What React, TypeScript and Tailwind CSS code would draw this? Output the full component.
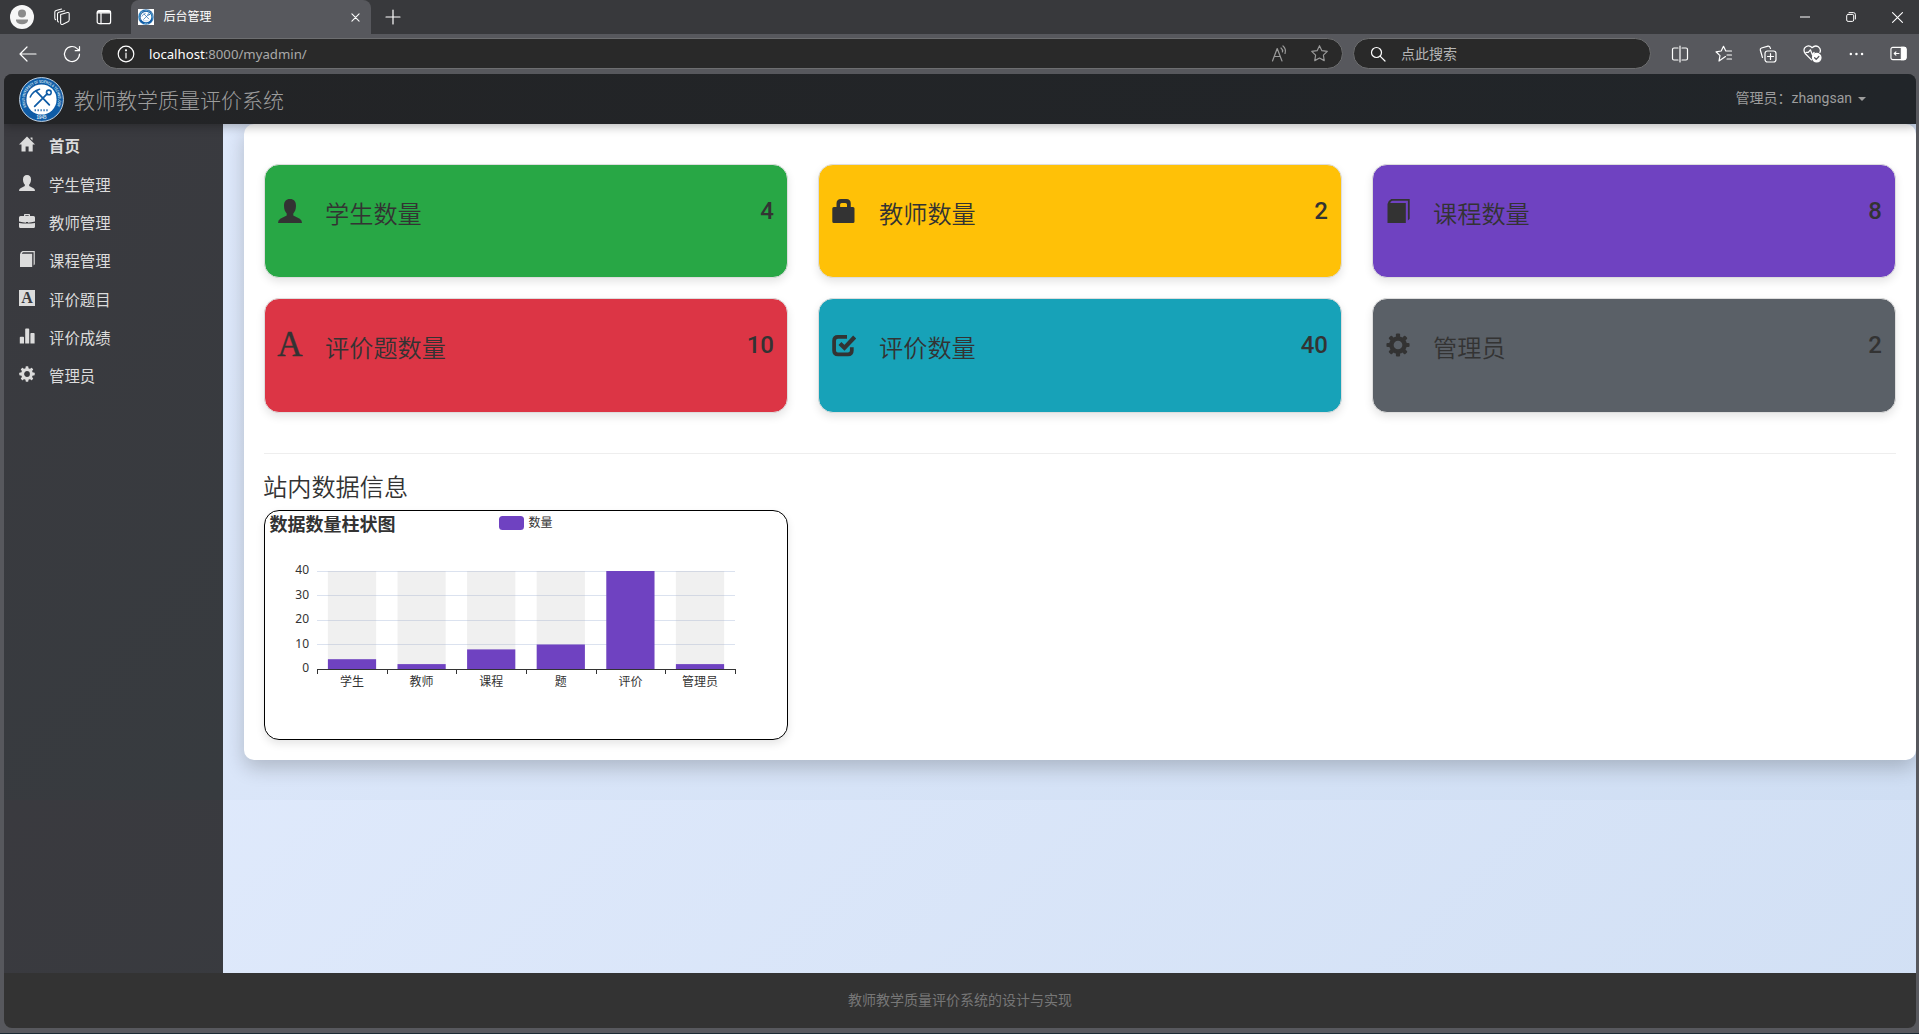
import React from "react";

const FONT = "font-['Roboto','Noto_Sans_CJK_SC',sans-serif]";
const UI = "font-['Noto_Sans','Noto_Sans_CJK_SC',sans-serif]";

type IconProps = { className?: string };

const glyphs: Record<string, React.ReactNode> = {
  home: <path d="M8 0.5 L16 8.6 H13.7 V15.5 H9.6 V10.5 H6.6 V15.5 H2.5 V8.6 H0 Z M11.5 1.6 h2 v3 l-2-2z" />,
  user: <path d="M8 0 C10.6 0 12 1.6 12 4.5 C12 7 11.2 8.6 10.2 9.6 V11 L14.5 13.2 Q16 14 16 16 H0 Q0 14 1.5 13.2 L5.8 11 V9.6 C4.8 8.6 4 7 4 4.5 C4 1.6 5.4 0 8 0 Z" />,
  briefcase: <path fillRule="evenodd" d="M5 3 V1.8 Q5 1 5.8 1 H10.2 Q11 1 11 1.8 V3 H14.5 Q16 3 16 4.5 V8.6 Q12 9.6 9 9.8 V9 H7 V9.8 Q4 9.6 0 8.6 V4.5 Q0 3 1.5 3 Z M6.3 3 H9.7 V2.2 H6.3 Z M0 10 Q4 10.6 8 10.6 Q12 10.6 16 10 V13.5 Q16 15 14.5 15 H1.5 Q0 15 0 13.5 Z" />,
  book: <path d="M1 3.4 Q1.4 1 3.5 0 H15.8 V13.2 L14.6 14.4 V1.2 H4.3 Q3 1.6 2.8 2.7 H13.2 V16 H1 Z" />,
  chart: <path d="M0.8 9.5 q0-.8.8-.8 h2.6 q.8 0 .8.8 V15.5 H0.8Z M6.2 1.3 q0-.8.8-.8 h2.4 q.8 0 .8.8 V15.5 H6.2Z M11.4 5.8 q0-.8.8-.8 h2.6 q.8 0 .8.8 V15.5 H11.4Z" />,
  lock: <path fillRule="evenodd" d="M3 5.3 V3 Q3 0 6 0 H9.5 Q12.5 0 12.5 3 V5.3 H14 Q15 5.3 15 6.3 V15 Q15 16 14 16 H1.2 Q0.2 16 0.2 15 V6.3 Q0.2 5.3 1.2 5.3 Z M5.4 5.3 H10 V3.6 Q10 2.6 9 2.6 H6.4 Q5.4 2.6 5.4 3.6 Z" />,
  check: (
    <>
      <path d="M10 2.6 H4 Q1.4 2.6 1.4 5.2 V11.6 Q1.4 14.2 4 14.2 H10.6 Q13.2 14.2 13.2 11.6 V9.5" fill="none" stroke="currentColor" strokeWidth="2.5" />
      <path d="M5.3 7 L8.3 9.9 L15.1 2.7" fill="none" stroke="currentColor" strokeWidth="2.8" />
    </>
  ),
};

function Glyph({ name, className = "" }: { name: string } & IconProps) {
  if (name === "font")
    return (
      <span className={`${className} flex items-center justify-center font-['Liberation_Serif',serif]`}>
        <span className="-mt-px text-[35px] font-normal leading-none [-webkit-text-stroke:0.4px_#333]">A</span>
      </span>
    );
  if (name === "fontBox")
    return (
      <span className={`${className} flex items-center justify-center bg-[#dcdcdc] font-['Liberation_Serif',serif] text-[16px] font-bold leading-none text-[#393a3f]`}>
        A
      </span>
    );
  if (name === "cog")
    return (
      <svg viewBox="0 0 16 16" className={className}>
        <circle cx="8" cy="8" r="4.4" fill="none" stroke="currentColor" strokeWidth="3" />
        {[0, 45, 90, 135, 180, 225, 270, 315].map((a) => (
          <rect key={a} x="6.6" y="0.3" width="2.8" height="3.4" rx="0.7" fill="currentColor" transform={`rotate(${a} 8 8)`} />
        ))}
      </svg>
    );
  return (
    <svg viewBox="0 0 16 16" fill="currentColor" className={className}>
      {glyphs[name]}
    </svg>
  );
}

function Line({ children, className = "size-5", vb = "0 0 20 20" }: { children: React.ReactNode; className?: string; vb?: string }) {
  return (
    <svg viewBox={vb} fill="none" stroke="currentColor" strokeWidth="1.2" strokeLinecap="round" strokeLinejoin="round" className={`shrink-0 ${className}`}>
      {children}
    </svg>
  );
}

function Emblem({ className = "" }: IconProps) {
  return (
    <svg viewBox="0 0 46 46" className={className}>
      <defs>
        <path id="ringTop" d="M7.6 30.5 A17.1 17.1 0 1 1 38.4 30.5" />
      </defs>
      <circle cx="23" cy="23" r="22.4" fill="#0f5ca6" stroke="#c8d8e8" strokeWidth="1" />
      <circle cx="23" cy="23" r="15.4" fill="#fff" />
      <text fontSize="4.2" fontWeight="700" fill="#dbe8f4" fontFamily="Liberation Sans" textLength="68" lengthAdjust="spacingAndGlyphs">
        <textPath href="#ringTop" textLength="68" lengthAdjust="spacingAndGlyphs">ANHUI UNIVERSITY OF SCIENCE &amp; TECHNOLOGY</textPath>
      </text>
      <text x="23" y="43.2" fontSize="4.6" fontWeight="700" fill="#dbe8f4" textAnchor="middle" fontFamily="Liberation Sans">1945</text>
      <g stroke="#0f5ca6" fill="none" strokeLinecap="round">
        <path d="M17.5 14.5 L31 28.5 M29 17 L16 30" strokeWidth="1.8" />
        <path d="M11.5 20.5 Q14 14.5 21 12.5" strokeWidth="1.6" />
        <circle cx="30.5" cy="15.8" r="2.4" strokeWidth="1.6" />
        <path d="M16 34 H30" strokeWidth="2" strokeDasharray="1.2 1.8" strokeLinecap="butt" />
      </g>
    </svg>
  );
}

function Browser() {
  return (
    <header className={`${UI} shrink-0 text-white`}>
      <div className="flex h-[34px] bg-[#38393c]">
        <div className="flex w-[131px] items-center bg-[#38393c] pl-[10px]">
          <svg viewBox="0 0 24 24" className="size-6">
            <circle cx="12" cy="12" r="12" fill="#f7f7f7" />
            <circle cx="12" cy="8.5" r="4" fill="#8b8b8b" />
            <path d="M6 14.5 H18 V15.5 Q17 19.3 12 19.3 Q7 19.3 6 15.5Z" fill="#8b8b8b" />
          </svg>
          <Line className="ml-[19px] size-[18px]">
            <path d="M8.5 7.2 L16 5 Q18 4.6 18 6.5 V13 Q18 14.5 16.6 15.2 L11 18 Q8.5 19 8.5 16.8 Z" />
            <path d="M6 15.5 Q5 15 5 13.5 V6.5 Q5 5.3 6.5 4.8 L13 3 M3 13 Q2 12.5 2 11 V4.5 Q2 3.3 3.5 2.8 L9.5 1.2" />
          </Line>
          <Line className="ml-[25px] size-[16px]" vb="0 0 16 16">
            <rect x="1.2" y="1.7" width="13.4" height="13" rx="2" />
            <path d="M1.2 4 H14.6 M5 4 V14.7" />
            <path d="M2 2.8 H14" strokeWidth="2" />
          </Line>
        </div>
        <div className="flex w-[240px] items-center rounded-t-lg bg-[#57585d] pl-[7px] pr-[11px]">
          <span className="flex size-4 bg-white"><Emblem className="size-4" /></span>
          <span className="ml-[9.5px] text-[12px]">后台管理</span>
          <Line className="ml-auto size-[9px]" vb="0 0 10 10"><path d="M1 1 L9 9 M9 1 L1 9" /></Line>
        </div>
        <Line className="ml-[14px] mt-[9px] size-4" vb="0 0 16 16"><path d="M8 1 V15 M1 8 H15" /></Line>
        <div className="ml-auto mr-4 flex items-center gap-[36px]">
          <Line className="size-[10px]" vb="0 0 10 10"><path d="M0.5 5 H9.5" /></Line>
          <Line className="size-[10px]" vb="0 0 10 10"><rect x="0.7" y="2.4" width="7" height="7" rx="1.4" strokeWidth="1" /><path d="M3 0.6 H7.4 Q9.4 0.6 9.4 2.6 V7" strokeWidth="1" /></Line>
          <Line className="size-[11px]" vb="0 0 10 10"><path d="M0.5 0.5 L9.5 9.5 M9.5 0.5 L0.5 9.5" strokeWidth="1" /></Line>
        </div>
      </div>
      <div className="flex h-10 items-center bg-[#57585d] pb-px pl-[18px]">
        <Line className="size-5"><path d="M18 10 H2 M9 3 L2 10 L9 17" /></Line>
        <Line className="ml-6 size-5"><path d="M17.5 10 A7.5 7.5 0 1 1 15.2 4.6 L17.5 6.7 M17.5 2.5 V6.7 H13.2" /></Line>
        <div className="ml-[19px] flex h-[31px] w-[1242px] items-center rounded-full border border-[#6d6e70] bg-[#292929] pl-[15px] pr-[13px]">
          <Line className="size-[18px]" vb="0 0 18 18"><circle cx="9" cy="9" r="7.8" /><path d="M9 8 V13" /><circle cx="9" cy="5.3" r=".5" fill="currentColor" /></Line>
          <span className="ml-[14px] pt-[2px] text-[13.2px] text-[#a9a9a9]"><span className="text-white">localhost</span>:8000/myadmin/</span>
          <Line className="ml-auto size-[18px] text-[#9b9b9b]" vb="0 0 18 18"><path d="M1.5 16 L6.2 3.5 L11 16 M3.2 11.5 H9.2 M10 3 Q12 4.5 11.5 7 M12 1 Q15.5 4 14 8.5" /></Line>
          <Line className="ml-[21px] size-[19px] text-[#9b9b9b]"><path d="M10 1.8 L12.5 7 L18.2 7.8 L14.1 11.8 L15 17.5 L10 14.8 L5 17.5 L5.9 11.8 L1.8 7.8 L7.5 7 Z" /></Line>
        </div>
        <div className="ml-[10px] flex h-[31px] w-[298px] items-center rounded-full border border-[#6d6e70] bg-[#292929] pl-4">
          <Line className="size-4" vb="0 0 16 16"><circle cx="6.5" cy="6.5" r="5" /><path d="M10.3 10.3 L15 15" /></Line>
          <span className="ml-[15px] text-[14px] leading-none text-[#b5b5b5]">点此搜索</span>
        </div>
        <div className="ml-auto mr-[12px] flex items-center gap-[26px]">
          <Line className="size-[18px]" vb="0 0 18 18"><path d="M7 3 H3 Q1.5 3 1.5 4.5 V13.5 Q1.5 15 3 15 H7 M11 3 H15 Q16.5 3 16.5 4.5 V13.5 Q16.5 15 15 15 H11 M9 1 V17" /></Line>
          <Line className="size-[18px]" vb="0 0 18 18"><path d="M10.5 11.6 L4 16 L5 10.6 L1 6.8 L6.2 6 L8.5 1.3 L10.8 6 H16.5 M12 10 H16.5 M12 14 H16.5" /></Line>
          <Line className="size-[18px]" vb="0 0 18 18"><rect x="6" y="6" width="11" height="11" rx="2.5" /><path d="M11.5 8.5 V14.5 M8.5 11.5 H14.5 M3.5 12.5 L1.3 5 Q1 3.5 2.5 3 L9 1.2 Q10.5 1 11 2.3 L11.5 3.5" /></Line>
          <Line className="size-[19px]" vb="0 0 18 18"><path d="M8 15 L2.3 9.3 Q.2 6.5 1.4 4 Q4 .5 7.5 2.5 L8.5 3.5 Q11.5 .8 14.5 2.6 Q17.5 5 16 8 M3 8 H5 L7 5.5 L9 10.5 L10.5 8" /><circle cx="13" cy="13" r="4" fill="#fff" /><path d="M11 13 L12.5 14.5 L15 11.8" stroke="#57585d" /></Line>
          <svg viewBox="0 0 18 18" className="size-[16px]" fill="currentColor"><circle cx="3.2" cy="9" r="1.4" /><circle cx="9.5" cy="9" r="1.4" /><circle cx="15.8" cy="9" r="1.4" /></svg>
          <Line className="size-[17px]" vb="0 0 18 18"><rect x="1" y="2.5" width="16" height="13" rx="2" /><path d="M12 2.5 H15 Q17 2.5 17 4.5 V13.5 Q17 15.5 15 15.5 H12Z" fill="#fff" /><path d="M9.5 9 H4.5 M6.3 7.2 L4.5 9 L6.3 10.8" /></Line>
        </div>
      </div>
    </header>
  );
}

const menu = [
  { icon: "home", label: "首页", gap: "h-[38px]" },
  { icon: "user", label: "学生管理", gap: "h-[39px]" },
  { icon: "briefcase", label: "教师管理", gap: "h-[38px]" },
  { icon: "book", label: "课程管理", gap: "h-[38px]" },
  { icon: "fontBox", label: "评价题目", gap: "h-[39px]" },
  { icon: "chart", label: "评价成绩", gap: "h-[38px]" },
  { icon: "cog", label: "管理员", gap: "h-[38px]" },
];

const stats = [
  { icon: "user", label: "学生数量", value: 4, bg: "bg-[#28a745]" },
  { icon: "lock", label: "教师数量", value: 2, bg: "bg-[#ffc107]" },
  { icon: "book", label: "课程数量", value: 8, bg: "bg-[#6f42c1]" },
  { icon: "font", label: "评价题数量", value: 10, bg: "bg-[#dc3545]" },
  { icon: "check", label: "评价数量", value: 40, bg: "bg-[#17a2b8]" },
  { icon: "cog", label: "管理员", value: 2, bg: "bg-[#5a6067]" },
];

const bars: [string, number][] = [["学生", 4], ["教师", 2], ["课程", 8], ["题", 10], ["评价", 40], ["管理员", 2]];

function BarChart() {
  const step = 69.6;
  const x0 = 52.2;
  return (
    <svg viewBox="0 0 522 228" className="block h-[228px] w-[522px]" fontSize="12" fill="#333" fontFamily="'Noto Sans','Noto Sans CJK SC',sans-serif">
      <text x="4.5" y="20" fontSize="18" fontWeight="700">数据数量柱状图</text>
      <rect x="234" y="5" width="25" height="14" rx="3.5" fill="#6f42c1" />
      <text x="263.5" y="15.5">数量</text>
      {[10, 20, 30, 40].map((v) => (
        <path key={v} d={`M52 ${Math.floor(158 - v * 2.45) + 0.5} H470`} stroke="#dbe2ef" />
      ))}
      {bars.map(([name, v], i) => (
        <g key={name}>
          <rect x={x0 + i * step + 10.7} y="60" width="48.2" height="98" fill="#b4b4b4" fillOpacity="0.2" />
          <rect x={x0 + i * step + 10.7} y={158 - v * 2.45} width="48.2" height={v * 2.45} fill="#6f42c1" />
          <text x={x0 + (i + 0.5) * step} y="175" textAnchor="middle">{name}</text>
        </g>
      ))}
      {[0, 10, 20, 30, 40].map((v) => (
        <text key={v} x="44" y={161 - v * 2.45} textAnchor="end">{v}</text>
      ))}
      <path d="M52 158.5 H470" stroke="#333" />
      {[0, 1, 2, 3, 4, 5, 6].map((i) => (
        <path key={i} d={`M${Math.round(x0 + i * step) + 0.5} 158 V163`} stroke="#333" />
      ))}
    </svg>
  );
}

export default function App() {
  return (
    <div className="flex h-[1034px] w-[1919px] flex-col overflow-hidden border-b border-[#1c2a33] bg-[#57585d]">
      <Browser />
      <div className={`${FONT} mx-1 mr-[3px] flex h-[954px] flex-col overflow-hidden rounded-lg bg-[#333]`}>
        <nav className="z-10 flex h-[50px] shrink-0 items-center bg-linear-to-r from-[#232426] to-[#212529] pl-[15px] pr-[50px] text-[#9d9d9d] shadow-[0_2px_10px_rgba(0,0,0,0.3)]">
          <Emblem className="size-[45px]" />
          <span className="ml-[10px] pt-[4px] text-[21px] font-light leading-none">教师教学质量评价系统</span>
          <span className="ml-auto pb-[2px] text-[14px] leading-[18px]">管理员：zhangsan</span>
          <span className="ml-[6px] border-x-4 border-t-4 border-x-transparent border-t-[#9d9d9d]" />
        </nav>
        <div className="flex h-[849px] shrink-0 bg-[linear-gradient(135deg,#e0eafc,#cfdef3)] bg-[length:100%_676px]">
          <aside className="w-[219px] shrink-0 bg-[linear-gradient(135deg,#3a3a3f,#373b3f)] bg-[length:100%_676px] pt-[3px] text-[15px] text-[#dcdcdc]">
            {menu.map((m, i) => (
              <div key={m.label} className={`flex items-center pl-[15px] ${m.gap}`}>
                <Glyph name={m.icon} className="-mt-[4px] size-4" />
                <span className={`ml-[14px] pt-[4px] text-[15.4px] ${i === 0 ? "font-bold" : ""}`}>{m.label}</span>
              </div>
            ))}
          </aside>
          <main className="ml-[21px] h-[636px] w-[1672px] rounded-[10px] bg-white px-5 pt-[40px] text-[#333] shadow-[0_8px_20px_rgba(0,0,0,0.2)]">
            <div className="grid grid-cols-[524px_524px_524px] grid-rows-[114px_115px] gap-x-[30px] gap-y-[20px]">
              {stats.map((s) => (
                <section key={s.label} className={`flex rounded-[15px] border border-[#ddd] px-[13px] shadow-[0_4px_8px_rgba(0,0,0,0.1)] ${s.bg}`}>
                  <Glyph name={s.icon} className="mt-[34px] size-[24px]" />
                  <span className="ml-[23px] mt-[32px] text-[24.2px] font-[350] leading-9">{s.label}</span>
                  <span className="ml-auto mt-[33px] text-[24px] font-medium leading-[26px]">{s.value}</span>
                </section>
              ))}
            </div>
            <hr className="mt-[40px] border-[#eee]" />
            <h3 className="-ml-px mt-[16px] text-[24.2px] font-[350] leading-9">站内数据信息</h3>
            <div className="mt-[4px] h-[230px] w-[524px] overflow-hidden rounded-[15px] border border-black shadow-[0_4px_8px_rgba(0,0,0,0.1)]">
              <BarChart />
            </div>
          </main>
        </div>
        <footer className="flex h-[55px] items-center justify-center text-[14px] text-[#777]">教师教学质量评价系统的设计与实现</footer>
      </div>
    </div>
  );
}
